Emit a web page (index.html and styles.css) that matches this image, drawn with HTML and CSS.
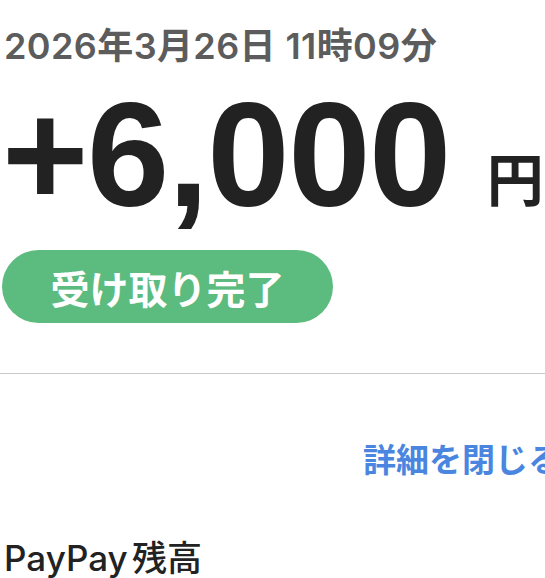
FILE: index.html
```html
<!DOCTYPE html>
<html lang="ja">
<head>
    <meta charset="UTF-8">
    <title>受け取り完了</title>
    <link rel="stylesheet" href="styles.css">
</head>
<body>

<div class="page">
    <p class="date">2026年3月26日 11時09分</p>
    <div class="amount">
        <span class="num">+6,000</span><span class="yen">円</span>
    </div>
    <div class="status">受け取り完了</div>
    <hr class="divider">
    <div class="toggle"><a href="#">詳細を閉じる</a></div>
    <h2 class="balance">PayPay 残高</h2>
</div>

</body>
</html>
```

FILE: styles.css
```css
*{
    margin: 0;
    padding: 0;
}
html,body{
    background: #fff;
    overflow: hidden;
}
.page{
    width: 575px;
    padding-left: 2px;
    font-family: Inter, "Noto Sans CJK JP", sans-serif;
    color: #222;
}
.date{
    margin-top: 24px;
    padding-left: 2px;
    font-size: 36px;
    line-height: 44px;
    font-weight: 600;
    letter-spacing: 0.4px;
    color: #5c5c5c;
}
.amount{
    margin-top: 14px;
    white-space: nowrap;
    line-height: 145px;
    height: 145px;
}
.num{
    font-family: "Liberation Sans", Arial, sans-serif;
    font-size: 148px;
    font-weight: bold;
    letter-spacing: -1.5px;
}
.yen{
    margin-left: 37px;
    font-family: "Noto Sans CJK JP", sans-serif;
    font-size: 57px;
    font-weight: bold;
    vertical-align: 5px;
}
.status{
    margin-top: 23px;
    width: 331px;
    height: 73px;
    border-radius: 37px;
    background-color: #5cbb7e;
    color: #fff;
    display: flex;
    align-items: center;
    justify-content: center;
    font-family: "Noto Sans CJK JP", sans-serif;
    font-size: 39px;
    font-weight: bold;
}
.divider{
    margin-top: 50px;
    margin-left: -2px;
    border: none;
    height: 1px;
    background-color: #c9c9c9;
}
.toggle{
    margin-top: 64px;
    text-align: right;
    font-family: "Noto Sans CJK JP", sans-serif;
    font-size: 33px;
    line-height: 40px;
    font-weight: bold;
    padding-right: 16px;
}
.toggle a{
    color: #4a86e0;
    text-decoration: none;
}
.balance{
    margin-top: 58px;
    padding-left: 2px;
    font-size: 35px;
    line-height: 44px;
    font-weight: 500;
    word-spacing: -5px;
    color: #222;
}
```
